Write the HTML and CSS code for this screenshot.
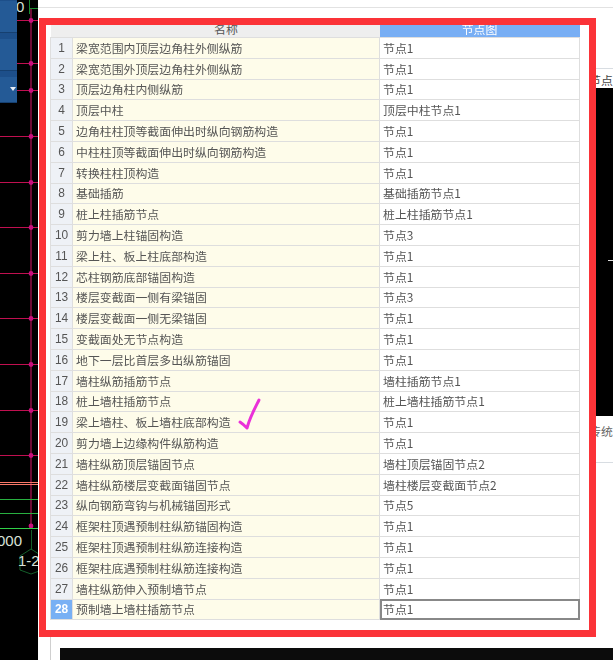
FILE: index.html
```html
<!DOCTYPE html>
<html lang="zh">
<head>
<meta charset="utf-8">
<title>节点设置</title>
<link rel="stylesheet" href="styles.css">
</head>
<body>
<div class="page">
  <aside class="cad">
    <svg class="cad-svg" width="38" height="660" viewBox="0 0 38 660">
      <rect width="38" height="660" fill="#000"/>
      <g stroke="#c01050" stroke-width="1">
        <path d="M0 20.5H38M0 63.5H38M0 90.5H38M0 136.5H38M0 182.5H38M0 227.5H38M0 273.5H38M0 318.5H38M0 364.5H38M0 410.5H38M0 455.5H38"/>
        <path d="M31 8V528" stroke="#d81868"/>
      </g>
      <g fill="#c8107e">
        <circle cx="31" cy="20.5" r="2.4"/><circle cx="31" cy="63.5" r="2.4"/><circle cx="31" cy="90.5" r="2.4"/><circle cx="31" cy="136.5" r="2.4"/><circle cx="31" cy="182.5" r="2.4"/><circle cx="31" cy="227.5" r="2.4"/><circle cx="31" cy="273.5" r="2.4"/><circle cx="31" cy="318.5" r="2.4"/><circle cx="31" cy="364.5" r="2.4"/><circle cx="31" cy="410.5" r="2.4"/><circle cx="31" cy="455.5" r="2.4"/><circle cx="31" cy="526" r="2.4"/>
      </g>
      <path d="M0 482.5H38M0 484.5H38" stroke="#f87868" stroke-width="1"/>
      <path d="M0 499.5H38M0 513.5H38" stroke="#28b040" stroke-width="1"/>
      <path d="M0 528.5H38" stroke="#30d048" stroke-width="1"/>
      <path d="M29.5 0V14" stroke="#1a8a30"/>
      <path d="M29 8.5H38" stroke="#1a8a30"/>
      <path d="M31.5 530V550M31 549L42 556V570L31 574L20 570V556Z" fill="none" stroke="#145f2a"/>
      <text x="-3" y="546" class="cad-text">000</text>
      <text x="18" y="566" class="cad-text">1-2</text>
      <text x="16" y="12" class="cad-text">0</text>
    </svg>
    <div class="toolbar">
      <div class="tool"></div>
      <div class="tool"></div>
      <div class="tool tool-last"><span class="caret"></span></div>
    </div>
  </aside>

  <main class="sheet">
    <div class="frame">
      <table class="grid">
        <colgroup><col class="c-num"><col class="c-name"><col class="c-node"></colgroup>
        <thead>
          <tr>
            <th class="corner"></th>
            <th><span class="clip">名称</span></th>
            <th class="active"><span class="clip">节点图</span></th>
          </tr>
        </thead>
        <tbody>
          <tr><td class="n">1</td><td class="name">梁宽范围内顶层边角柱外侧纵筋</td><td class="node">节点1</td></tr>
          <tr><td class="n">2</td><td class="name">梁宽范围外顶层边角柱外侧纵筋</td><td class="node">节点1</td></tr>
          <tr><td class="n">3</td><td class="name">顶层边角柱内侧纵筋</td><td class="node">节点1</td></tr>
          <tr><td class="n">4</td><td class="name">顶层中柱</td><td class="node">顶层中柱节点1</td></tr>
          <tr><td class="n">5</td><td class="name">边角柱柱顶等截面伸出时纵向钢筋构造</td><td class="node">节点1</td></tr>
          <tr><td class="n">6</td><td class="name">中柱柱顶等截面伸出时纵向钢筋构造</td><td class="node">节点1</td></tr>
          <tr><td class="n">7</td><td class="name">转换柱柱顶构造</td><td class="node">节点1</td></tr>
          <tr><td class="n">8</td><td class="name">基础插筋</td><td class="node">基础插筋节点1</td></tr>
          <tr><td class="n">9</td><td class="name">桩上柱插筋节点</td><td class="node">桩上柱插筋节点1</td></tr>
          <tr><td class="n">10</td><td class="name">剪力墙上柱锚固构造</td><td class="node">节点3</td></tr>
          <tr><td class="n">11</td><td class="name">梁上柱、板上柱底部构造</td><td class="node">节点1</td></tr>
          <tr><td class="n">12</td><td class="name">芯柱钢筋底部锚固构造</td><td class="node">节点1</td></tr>
          <tr><td class="n">13</td><td class="name">楼层变截面一侧有梁锚固</td><td class="node">节点3</td></tr>
          <tr><td class="n">14</td><td class="name">楼层变截面一侧无梁锚固</td><td class="node">节点1</td></tr>
          <tr><td class="n">15</td><td class="name">变截面处无节点构造</td><td class="node">节点1</td></tr>
          <tr><td class="n">16</td><td class="name">地下一层比首层多出纵筋锚固</td><td class="node">节点1</td></tr>
          <tr><td class="n">17</td><td class="name">墙柱纵筋插筋节点</td><td class="node">墙柱插筋节点1</td></tr>
          <tr><td class="n">18</td><td class="name">桩上墙柱插筋节点</td><td class="node">桩上墙柱插筋节点1</td></tr>
          <tr><td class="n">19</td><td class="name">梁上墙柱、板上墙柱底部构造</td><td class="node">节点1</td></tr>
          <tr><td class="n">20</td><td class="name">剪力墙上边缘构件纵筋构造</td><td class="node">节点1</td></tr>
          <tr><td class="n">21</td><td class="name">墙柱纵筋顶层锚固节点</td><td class="node">墙柱顶层锚固节点2</td></tr>
          <tr><td class="n">22</td><td class="name">墙柱纵筋楼层变截面锚固节点</td><td class="node">墙柱楼层变截面节点2</td></tr>
          <tr><td class="n">23</td><td class="name">纵向钢筋弯钩与机械锚固形式</td><td class="node">节点5</td></tr>
          <tr><td class="n">24</td><td class="name">框架柱顶遇预制柱纵筋锚固构造</td><td class="node">节点1</td></tr>
          <tr><td class="n">25</td><td class="name">框架柱顶遇预制柱纵筋连接构造</td><td class="node">节点1</td></tr>
          <tr><td class="n">26</td><td class="name">框架柱底遇预制柱纵筋连接构造</td><td class="node">节点1</td></tr>
          <tr><td class="n">27</td><td class="name">墙柱纵筋伸入预制墙节点</td><td class="node">节点1</td></tr>
          <tr><td class="n sel">28</td><td class="name">预制墙上墙柱插筋节点</td><td class="node cur">节点1</td></tr>
        </tbody>
      </table>
    </div>

    <section class="preview">
      <div class="preview-title">节点</div>
      <div class="preview-black"><span class="preview-mark"></span></div>
      <div class="preview-note">传统</div>
    </section>

    <svg class="check" width="26" height="36" viewBox="0 0 26 36">
      <path d="M22 3C18 11 13 20 10 31C8 29 6 27 3 25" fill="none" stroke="#ea30d8" stroke-width="3" stroke-linecap="round" stroke-linejoin="round"/>
    </svg>

    <div class="bottom-bar"></div>
    <div class="top-rule"></div>
    <div class="side-rule"></div>
  </main>
</div>
</body>
</html>
```

FILE: styles.css
```css
html, body {
  margin: 0;
  padding: 0;
  background: #fff;
}

body {
  width: 613px;
  height: 660px;
  overflow: hidden;
  font-family: "Noto Sans CJK SC", "Liberation Sans", sans-serif;
  font-size: 11.9px;
  color: #555;
}

.page {
  display: flex;
  width: 613px;
  height: 660px;
}

.cad {
  position: relative;
  width: 38px;
  flex: none;
}

.cad-svg {
  display: block;
}

.cad-text {
  fill: #d8e0d8;
  font-family: "Liberation Sans", sans-serif;
  font-size: 15px;
}

.toolbar {
  position: absolute;
  top: 0;
  left: 0;
  width: 17px;
  height: 103px;
  box-sizing: border-box;
  padding-top: 1px;
  display: flex;
  flex-direction: column;
  gap: 6px;
  background: #1d4f8a;
}

.tool {
  height: 32px;
  background: #245a96;
  border-bottom: 1px solid #164070;
}

.tool-last {
  display: flex;
  align-items: center;
  justify-content: flex-end;
  height: 26px;
  padding-right: 1px;
}

.caret {
  width: 0;
  height: 0;
  border-left: 3.5px solid transparent;
  border-right: 3.5px solid transparent;
  border-top: 4px solid #e8eef5;
}

.sheet {
  position: relative;
  flex: 1;
  height: 660px;
}

.frame {
  position: relative;
  z-index: 2;
  box-sizing: border-box;
  width: 557px;
  height: 619px;
  margin: 18px 0 0 1px;
  border: 7px solid #fb3338;
  padding: 0 0 0 4px;
  background: #fff;
}

.grid {
  table-layout: fixed;
  border-collapse: collapse;
  width: 529px;
  filter: blur(0.4px);
}

.c-num { width: 22px; }
.c-name { width: 307px; }
.c-node { width: 200px; }

.grid th {
  height: 12px;
  padding: 0;
  overflow: hidden;
  background: #eeeeee;
  font-weight: 400;
  line-height: 12px;
  color: #555;
}

.grid th.active {
  background: #78aef4;
  color: #fff;
}

.clip {
  display: block;
  height: 12px;
  margin-top: -4px;
}

.grid td {
  height: 20.8px;
  box-sizing: border-box;
  padding: 0 0 0 3px;
  line-height: 16px;
  white-space: nowrap;
  overflow: hidden;
  border: 1px solid #dedede;
}

.grid td.n {
  padding: 0;
  text-align: center;
  background: #eef1f6;
  font-family: "Liberation Sans", sans-serif;
}

.grid td.sel {
  background: #78b0f4;
  color: #fff;
  font-weight: 700;
}

.grid td.name {
  background: #fefcea;
}

.grid td.node {
  background: #fff;
}

.grid td.cur {
  outline: 2px solid #888;
  outline-offset: -2px;
}

.preview {
  position: absolute;
  z-index: 1;
  top: 68px;
  left: 545px;
  width: 60px;
  height: 395px;
  box-sizing: border-box;
  border: 1px solid #d8dde2;
  background: #fff;
}

.preview-title {
  height: 19px;
  margin-left: 5px;
  line-height: 22px;
  color: #444;
}

.preview-black {
  position: relative;
  height: 328px;
  background: #000;
}

.preview-mark {
  position: absolute;
  top: 172px;
  left: 24px;
  width: 6px;
  height: 1px;
  background: #ddd;
}

.preview-note {
  margin-left: 5px;
  margin-top: 7px;
  line-height: 16px;
  color: #666;
}

.check {
  position: absolute;
  z-index: 3;
  top: 397px;
  left: 199px;
}

.bottom-bar {
  position: absolute;
  left: 22px;
  top: 648px;
  width: 553px;
  height: 12px;
  background: #0c0c0c;
}

.top-rule {
  position: absolute;
  left: 0;
  top: 7px;
  width: 575px;
  height: 1px;
  background: #e2e2e2;
}

.side-rule {
  position: absolute;
  left: 12px;
  top: 637px;
  width: 1px;
  height: 23px;
  background: #cfcfcf;
}
```
